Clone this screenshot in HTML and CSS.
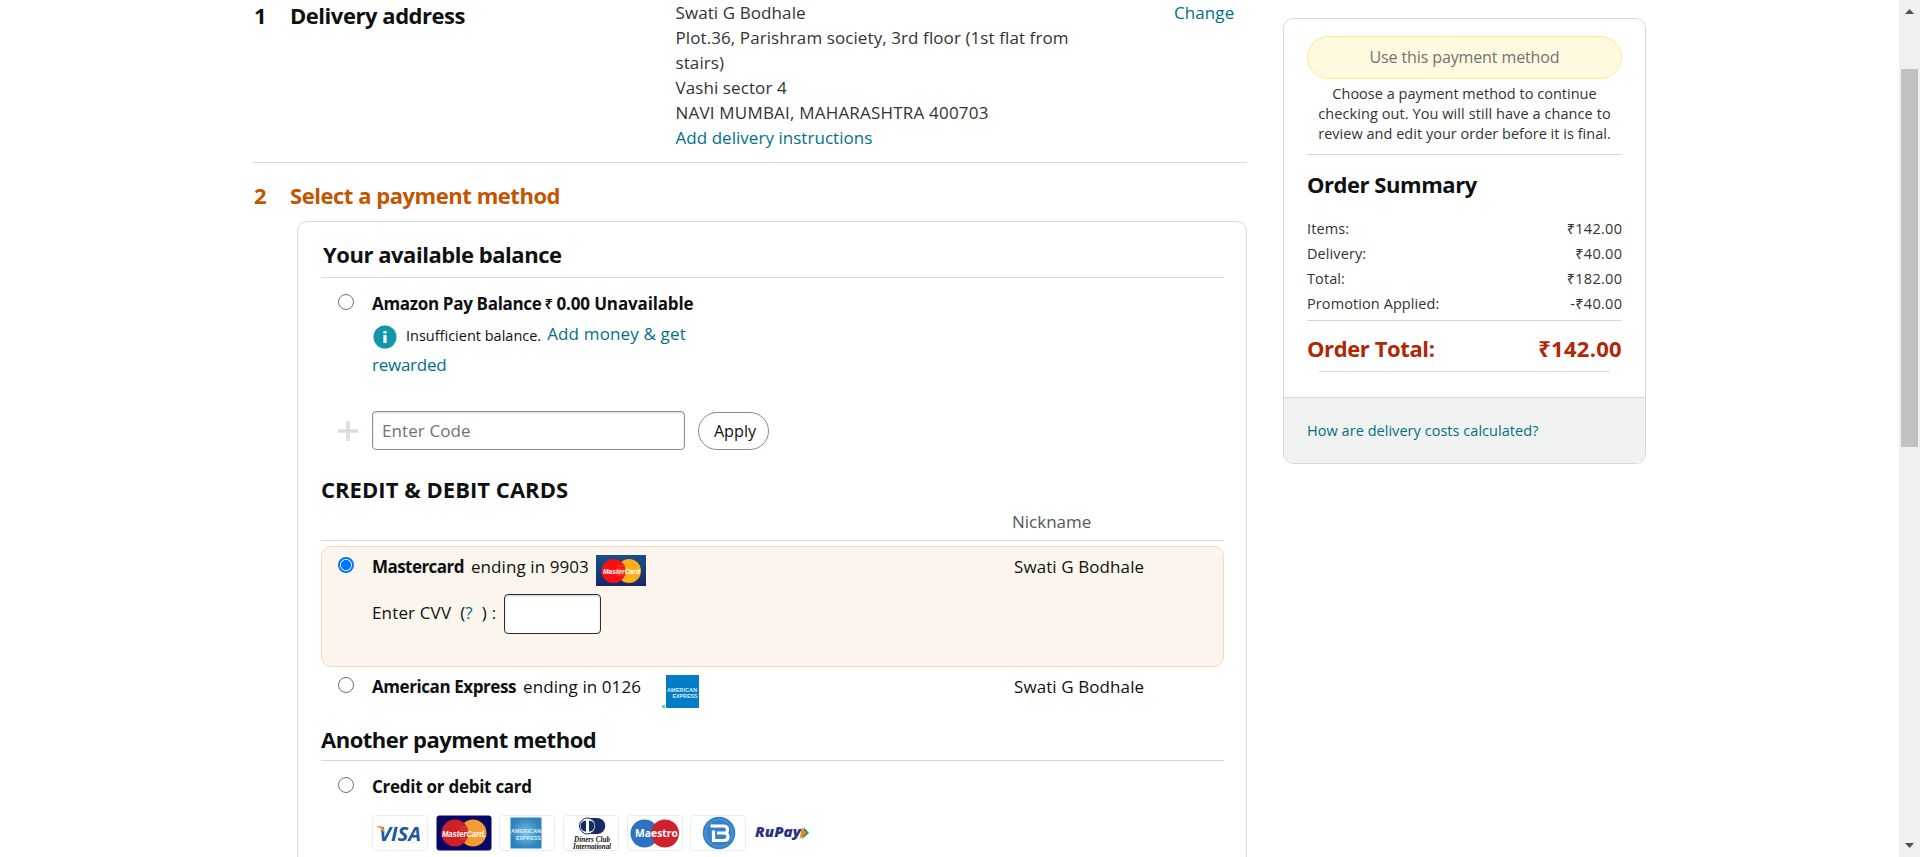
FILE: index.html
```html
<!DOCTYPE html>
<html lang="en">
<head>
<meta charset="utf-8">
<title>Select a payment method</title>
<link rel="stylesheet" href="styles.css">
</head>
<body>
<div class="page">
  <main class="checkout">
    <section class="step">
      <h2 class="step-num">1</h2>
      <h2 class="step-title">Delivery address</h2>
      <div class="address">
        <span>Swati G Bodhale</span><br>
        <span>Plot.36, Parishram society, 3rd floor (1st flat from</span><br>
        <span>stairs)</span><br>
        <span>Vashi sector 4</span><br>
        <span class="caps">NAVI MUMBAI, MAHARASHTRA 400703</span><br>
        <a class="link add-instr">Add delivery instructions</a>
      </div>
      <a class="link">Change</a>
    </section>
    <div class="step current">
      <h2 class="step-num">2</h2>
      <h2 class="step-title">Select a payment method</h2>
    </div>
    <section class="methods">
      <h3 class="head head-balance">Your available balance</h3>
      <div class="option balance">
        <i class="radio"></i>
        <div class="balance-info">
          <div class="balance-title"><b>Amazon Pay Balance</b><b class="rupee">₹</b><b class="unavailable">0.00 Unavailable</b></div>
          <div class="notice">
            <svg class="info" viewBox="0 0 24 24"><circle cx="12" cy="12" r="11.5" fill="#1196ab"/><path d="M10.4 6h3.2v2.4h-3.2zM10.4 10h3.2v8h-3.2z" fill="#fff"/></svg>
            <span class="small">Insufficient balance.</span>
            <a class="link">Add money &amp; get</a>
          </div>
          <a class="link rewarded">rewarded</a>
        </div>
      </div>
      <div class="code-row">
        <svg class="plus" viewBox="0 0 20 20"><path d="M10 0v20M0 10h20" stroke="#ddd" stroke-width="3.6"/></svg>
        <div class="code-input">Enter Code</div>
        <div class="apply">Apply</div>
      </div>
      <h3 class="head head-cards">CREDIT &amp; DEBIT CARDS</h3>
      <div class="nick-head">Nickname</div>
      <div class="option saved selected">
        <i class="radio on"></i>
        <div class="card-cell">
          <div class="card-line"><b class="brand-name">Mastercard</b><span>ending in 9903</span>
            <svg class="mc-logo" viewBox="0 0 50 31"><defs><linearGradient id="mcbg" x1="0" y1="0" x2="0" y2="1"><stop offset="0" stop-color="#14508a"/><stop offset=".5" stop-color="#173e7a"/><stop offset="1" stop-color="#1a2566"/></linearGradient></defs><path fill="url(#mcbg)" d="M0 0h50v31H0z"/><circle cx="33" cy="16" r="12" fill="#fbae17"/><circle cx="17.500" cy="16" r="12" fill="#f8100f"/><path d="M21 11h9M21 14h8M21 17h8M21 20h9" stroke="#ef4a12" stroke-width="1.200"/><text class="mc-word" x="7" y="19" textLength="37" lengthAdjust="spacingAndGlyphs">MasterCard</text></svg>
          </div>
          <div class="cvv-line"><span class="cvv-label">Enter CVV</span><span class="paren">(</span><a class="link">?</a><span class="close">)</span><span>:</span><div class="cvv-input"></div></div>
        </div>
        <span class="nick">Swati G Bodhale</span>
      </div>
      <div class="option saved">
        <i class="radio"></i>
        <div class="card-cell">
          <div class="card-line"><b class="brand-name amex">American Express</b><span>ending in 0126</span>
            <svg class="ax-logo" viewBox="0 0 37 33"><path fill="#037cc6" d="M4 0h33v33H4z"/><path fill="#78bce6" d="M0 30h3v3H0z"/><g class="ax-word"><text x="5" y="16.500" textLength="30" lengthAdjust="spacingAndGlyphs">AMERICAN</text><text x="10.500" y="23" textLength="25" lengthAdjust="spacingAndGlyphs">EXPRESS</text></g></svg>
          </div>
        </div>
        <span class="nick">Swati G Bodhale</span>
      </div>
      <h3 class="head head-another">Another payment method</h3>
      <div class="option new-card">
        <i class="radio"></i>
        <div class="card-cell">
          <div class="card-line"><b>Credit or debit card</b></div>
          <div class="brands">
            <svg class="brand" viewBox="0 0 56 36"><rect class="plate" x=".5" y=".5" width="55" height="35" rx="3"/><text x="7" y="26" class="visa" textLength="42" lengthAdjust="spacingAndGlyphs">VISA</text><path d="M4 11h6l4 8-4-4z" fill="#e8a93a"/></svg>
            <svg class="brand" viewBox="0 0 56 36"><rect x=".5" y=".5" width="55" height="35" rx="3" fill="#060665"/><circle cx="37" cy="18" r="13.500" fill="#f49b33"/><circle cx="19" cy="18" r="13.500" fill="#cf2027"/><path d="M24 12h7M24 15h8M24 21h8M24 24h7" stroke="#db4b2a" stroke-width="1.200"/><text class="mc-word big" x="6" y="21.500" textLength="44" lengthAdjust="spacingAndGlyphs">MasterCard.</text></svg>
            <svg class="brand" viewBox="0 0 56 36"><defs><radialGradient id="axbg"><stop offset="0" stop-color="#78bfe6"/><stop offset="1" stop-color="#2c83bd"/></radialGradient></defs><rect class="plate" x=".5" y=".5" width="55" height="35" rx="3"/><path d="M11.500 2.500h31v31h-31z" fill="url(#axbg)"/><g class="ax-word"><text x="12" y="17.500" textLength="30" lengthAdjust="spacingAndGlyphs">AMERICAN</text><text x="17" y="24.500" textLength="25" lengthAdjust="spacingAndGlyphs">EXPRESS</text></g></svg>
            <svg class="brand" viewBox="0 0 56 36"><rect class="plate" x=".5" y=".5" width="55" height="35" rx="3"/><path d="M24 3h10a8.300 8 0 0 1 0 16H24z" fill="#142b67"/><circle cx="24.500" cy="11" r="8" fill="#fff" stroke="#142b67"/><path d="M23 5.500a5.500 5.500 0 0 0 0 11zM26 5.500a5.500 5.500 0 0 1 0 11z" fill="#142b67"/><g class="diners"><text x="11" y="27" textLength="36" lengthAdjust="spacingAndGlyphs">Diners Club</text><text x="10" y="34" textLength="38" lengthAdjust="spacingAndGlyphs">International</text></g></svg>
            <svg class="brand" viewBox="0 0 56 36"><rect class="plate" x=".5" y=".5" width="55" height="35" rx="3"/><circle cx="17.500" cy="18.500" r="14" fill="#2b73c2"/><circle cx="38" cy="18.500" r="14" fill="#d0202a"/><text class="maestro" x="8" y="22" textLength="43" lengthAdjust="spacingAndGlyphs">Maestro</text></svg>
            <svg class="brand" viewBox="0 0 56 36"><rect class="plate" x=".5" y=".5" width="55" height="35" rx="3"/><circle cx="29" cy="18" r="16.300" fill="#3580c8"/><circle cx="29" cy="18" r="13.500" fill="none" stroke="#5a9bd8"/><path d="M20.500 11H33.500q4 0 4 3.600t-3.500 3.400q4 0 4 3.700t-4 3.800H23.500V15.500M27 18h8" fill="none" stroke="#fff" stroke-width="3.200"/></svg>
            <svg class="brand" viewBox="0 0 56 36"><text class="rupay" x="1" y="22" textLength="46" lengthAdjust="spacingAndGlyphs">RuPay</text><path d="M50 12.500l5 5.500-7 6z" fill="#1f9a55"/><path d="M48 12.500l4.500 5.500-7 6z" fill="#f58220"/></svg>
          </div>
        </div>
      </div>
    </section>
  </main>
  <aside class="summary">
    <div class="summary-body">
      <div class="use-btn">Use this payment method</div>
      <p class="hint"><span>Choose a payment method to continue</span><br><span class="wide">checking out. You will still have a chance to</span><br><span>review and edit your order before it is final.</span></p>
      <h3 class="sum-title">Order Summary</h3>
      <div class="line"><span>Items:</span><span class="amt">₹142.00</span></div>
      <div class="line"><span>Delivery:</span><span class="amt">₹40.00</span></div>
      <div class="line"><span>Total:</span><span class="amt">₹182.00</span></div>
      <div class="line"><span>Promotion Applied:</span><span class="amt">-₹40.00</span></div>
      <div class="total"><span>Order Total:</span><span class="total-amt">₹142.00</span></div>
      <div class="rule"></div>
    </div>
    <div class="summary-foot"><a class="link">How are delivery costs calculated?</a></div>
  </aside>
  <div class="scrollbar">
    <svg class="arrow" viewBox="0 0 9 5"><path d="M0 5l4.500-5L9 5z" fill="#505050"/></svg>
    <div class="thumb"></div>
    <svg class="arrow" viewBox="0 0 9 5"><path d="M0 0h9L4.500 5z" fill="#505050"/></svg>
  </div>
</div>
</body>
</html>
```

FILE: styles.css
```css
* { box-sizing: border-box; }
body {
  margin: 0;
  background: #fff;
  color: #0f1111;
  font: 17px/25px "Open Sans", "Noto Sans", sans-serif;
  letter-spacing: .09px;
  overflow: hidden;
}
h2, h3, p { margin: 0; }
b { font-weight: 700; letter-spacing: -.26px; }
span, b, a { white-space: nowrap; }
svg { display: block; flex: none; letter-spacing: 0; }
.link { color: #007185; text-decoration: none; }
.page {
  display: grid;
  grid-template-columns: 994px 363px 21px;
  column-gap: 36px;
  justify-content: start;
  padding-left: 253px;
  height: 857px;
  overflow: hidden;
}

.step {
  display: grid;
  grid-template-columns: 37px 385px 499px 1fr;
  height: 163px;
  border-bottom: 1px solid #d5d9d9;
}
.step h2, .head, .sum-title {
  font-size: 22px;
  font-weight: 700;
  letter-spacing: -.46px;
  line-height: 32px;
  white-space: nowrap;
}
.step h2 { line-height: 31px; }
.step-num { padding-left: 1px; }
.address { color: #333; padding-left: .5px; }
.caps { letter-spacing: .2px; }
.add-instr { letter-spacing: .04px; }
.current { height: 58px; border: 0; color: #c45500; padding-top: 17px; }

.methods {
  margin-left: 44px;
  height: 660px;
  border: 1px solid #d5d9d9;
  border-radius: 10px;
  padding: 0 22px 0 23px;
}
.head-balance { height: 56px; padding: 16px 0 0 2px; border-bottom: 1px solid #d5d9d9; }
.option { display: flex; }
.radio {
  flex: none;
  width: 16px;
  height: 16px;
  margin: 16px 18px 0 17px;
  border: 1px solid #707070;
  border-radius: 50%;
  background: #fff;
}
.radio.on { border: 2px solid #0075ff; background: radial-gradient(circle, #0075ff 4.8px, #fff 5.3px); }
.balance { height: 133px; }
.balance-title { display: flex; margin-top: 13px; }
.balance-title b { letter-spacing: -.32px; }
.rupee { width: 9px; margin: 0 3px 0 3px; font-size: 15px; font-weight: 600; }
.balance-title .unavailable { letter-spacing: -.15px; }
.notice { display: flex; height: 30px; margin-top: 4px; }
.info { width: 24px; height: 24px; margin: 5px 9px 0 1px; }
.small { margin-right: 6px; font-size: 14.5px; letter-spacing: 0; line-height: 31px; }
.notice .link { line-height: 27px; letter-spacing: .15px; }
.rewarded { display: block; line-height: 29px; letter-spacing: -.25px; }

.code-row { display: flex; height: 64px; }
.plus { width: 20px; height: 20px; margin: 10px 14px 0 17px; }
.code-input {
  width: 313px;
  height: 39px;
  border: 1px solid #888c8c;
  border-radius: 4px;
  padding: 6px 9px;
  color: #6f7373;
  box-shadow: inset 0 1px 2px rgba(15, 17, 17, .15);
}
.apply {
  width: 71px;
  height: 38px;
  margin: 1px 0 0 13px;
  border: 1px solid #888c8c;
  border-radius: 19px;
  padding-left: 3px;
  text-align: center;
  font-size: 16.2px;
  letter-spacing: 0;
  line-height: 36px;
}
.head-cards { height: 34px; }
h3.head-cards { line-height: 28px; letter-spacing: .04px; }
.nick-head { height: 32px; padding-left: 691px; color: #565959; letter-spacing: 0; border-bottom: 1px solid #d5d9d9; }
.saved { height: 60px; }
.saved .radio { margin-top: 10px; }
.selected {
  height: 121px;
  margin-top: 5px;
  background: #fcf5ee;
  border: 1px solid #fbd8b4;
  border-radius: 10px;
}
.selected .radio { margin-left: 16px; }
.card-cell { width: 642px; flex: none; }
.card-line { display: flex; height: 47px; padding-top: 7px; }
.card-line .brand-name { margin-right: 7px; letter-spacing: -.55px; }
.card-line .amex { letter-spacing: -.42px; }
.mc-logo { width: 50px; height: 31px; margin: 1px 0 0 7.5px; }
.mc-word { font: italic bold 7.5px "Liberation Sans", sans-serif; fill: #fff; }
.mc-word.big { font-size: 9.5px; }
.cvv-line { display: flex; line-height: 38px; }
.cvv-label { letter-spacing: .15px; }
.paren { margin-left: 9px; }
.cvv-line .close { margin: 0 5px 0 9px; }
.cvv-input {
  width: 97px;
  height: 40px;
  margin-left: 8px;
  border: 1px solid #2b2f2f;
  border-radius: 4px;
  background: #fff;
  box-shadow: inset 0 1px 2px rgba(15, 17, 17, .2);
}
.ax-logo { width: 37px; height: 33px; margin: 1px 0 0 20.5px; }
.ax-word { font: bold 6px "Liberation Sans", sans-serif; fill: #d9eefa; }
.nick { padding-top: 7px; }
.head-another { height: 34px; border-bottom: 1px solid #d5d9d9; }
h3.head-another { line-height: 24px; letter-spacing: -.5px; }
.new-card .card-line { height: 54px; padding-top: 13px; }
.brands { display: flex; gap: 7.7px; }
.brand { width: 56px; height: 36px; }
.plate { fill: #fff; stroke: #e9ebed; }
.visa { font: italic bold 20px "Open Sans", sans-serif; fill: #20589f; }
.diners { font: italic bold 7.5px "Liberation Serif", serif; fill: #111; }
.maestro { font: bold 11px "Open Sans", sans-serif; fill: #fff; }
.rupay { font: italic 800 14px "Open Sans", sans-serif; fill: #2a3282; }

.summary {
  align-self: start;
  height: 446px;
  margin-top: 18px;
  border: 1px solid #d5d9d9;
  border-radius: 10px;
  overflow: hidden;
}
.summary-body { padding: 17px 23px 0; height: 378px; }
.use-btn {
  height: 43px;
  border: 1px solid #ffe78f;
  border-radius: 22px;
  background: #fff9df;
  color: #6f7373;
  text-align: center;
  font-size: 16px;
  letter-spacing: -.12px;
  line-height: 41px;
}
.hint {
  height: 76px;
  padding-top: 5px;
  border-bottom: 1px solid #d5d9d9;
  color: #333;
  font-size: 14.5px;
  letter-spacing: .02px;
  line-height: 20px;
  text-align: center;
}
.wide { letter-spacing: .08px; }
.sum-title { height: 61px; padding-top: 13px; }
.line { display: flex; justify-content: space-between; height: 25px; color: #333; font-size: 14.5px; }
.amt { letter-spacing: .3px; margin-right: -.3px; }
.total {
  display: flex;
  justify-content: space-between;
  height: 50px;
  margin-top: 4px;
  padding-top: 11px;
  border-top: 1px solid #d5d9d9;
  color: #b12704;
  font-size: 22px;
  font-weight: 700;
  letter-spacing: -.4px;
  line-height: 32px;
}
.total-amt { letter-spacing: .3px; }
.rule { height: 1px; margin: 1px 12px 0; background: #d5d9d9; }
.summary-foot {
  height: 66px;
  padding: 20px 23px;
  border-top: 1px solid #d5d9d9;
  background: #f0f2f2;
  font-size: 14.5px;
  letter-spacing: .04px;
}
.scrollbar {
  display: flex;
  flex-direction: column;
  align-items: center;
  width: 21px;
  height: 857px;
  margin-left: 217px;
  padding: 9px 0;
  background: #f0f0f0;
}
.arrow { width: 9px; height: 5px; }
.thumb { width: 17px; height: 378px; margin: 55px 0 auto; background: #c1c1c1; }
```
